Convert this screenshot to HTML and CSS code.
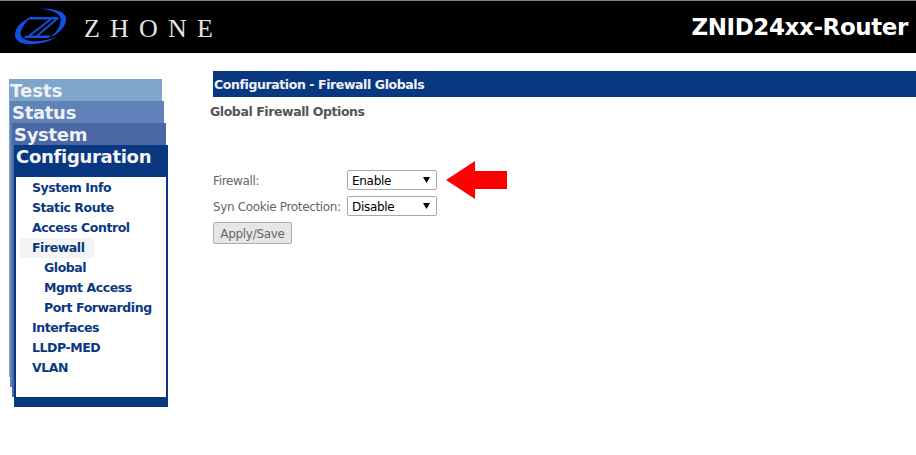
FILE: index.html
```html
<!DOCTYPE html>
<html lang="en">
<head>
  <meta charset="UTF-8">
  <title>ZNID24xx-Router</title>
  <link rel="stylesheet" href="styles.css">
</head>
<body>
  <div class="header">
    <div class="brand">
      <svg class="logo" width="56" height="44" viewBox="12 5 56 44">
        <!-- left swoosh -->
        <path d="M31 17C22 21 15 27 15 35C15 42 24 45 33 44C41 44 50 41 57 37C48 40 39 42 31 41C23 40 19 36 21 31C23 26 26 21 31 17Z" fill="#1450e0"/>
        <!-- right swoosh -->
        <path d="M40 9C49 8 60 10 64 14C68 18 66 25 61 30C58 33 54 36 50 38C54 34 59 29 60 24C62 18 59 14 54 12C50 10 45 9 40 9Z" fill="#1450e0"/>
        <!-- z -->
        <path d="M30 17H59L56 19.5H27.5ZM26 35.5H51L48.5 38H23.5Z" fill="#1450e0"/>
        <path d="M58 18L37 36M51 19L29 36" stroke="#1450e0" stroke-width="1.8" fill="none"/>
      </svg>
      <span class="brand-name">ZHONE</span>
    </div>
    <div class="product">ZNID24xx-Router</div>
  </div>

  <div class="page">
    <div class="nav">
      <div class="tab tab-tests">
        <div class="tab-title tests-title">Tests</div>
        <div class="tab tab-status">
          <div class="tab-title">Status</div>
          <div class="tab tab-system">
            <div class="tab-title">System</div>
            <div class="tab tab-config">
              <div class="tab-title config-title">Configuration</div>
              <ul class="menu">
                <li><a>System Info</a></li>
                <li><a>Static Route</a></li>
                <li><a>Access Control</a></li>
                <li class="active"><a>Firewall</a></li>
                <li class="sub"><a>Global</a></li>
                <li class="sub"><a>Mgmt Access</a></li>
                <li class="sub"><a>Port Forwarding</a></li>
                <li><a>Interfaces</a></li>
                <li><a>LLDP-MED</a></li>
                <li><a>VLAN</a></li>
              </ul>
            </div>
          </div>
        </div>
      </div>
    </div>

    <div class="content">
      <div class="title-bar">Configuration - Firewall Globals</div>
      <h3 class="section-title">Global Firewall Options</h3>

      <form class="options">
        <div class="form-row">
          <label class="field-label">Firewall:</label>
          <select class="field-select"><option>Enable</option><option>Disable</option></select>
          <svg class="arrow" width="62" height="38" viewBox="0 0 62 38">
            <path d="M0 19L29 0V10H61V28H29V38Z" fill="#ff0000"/>
          </svg>
        </div>
        <div class="form-row">
          <label class="field-label">Syn Cookie Protection:</label>
          <select class="field-select"><option>Disable</option><option>Enable</option></select>
        </div>
        <button type="button" class="save-btn">Apply/Save</button>
      </form>
    </div>
  </div>
</body>
</html>
```

FILE: styles.css
```css
body {
  margin: 0;
  font-family: "DejaVu Sans", Verdana, sans-serif;
  background: #fff;
  height: 455px;
  overflow: hidden;
}

.header {
  display: flex;
  justify-content: space-between;
  align-items: center;
  height: 52px;
  background: #000;
  border-top: 1px solid #888;
  padding-right: 8px;
}

.brand {
  display: flex;
  align-items: center;
  padding-left: 12px;
}

.logo {
  margin-right: 16px;
}

.brand-name {
  padding-top: 3px;
  font-family: "Liberation Serif", serif;
  font-size: 26px;
  letter-spacing: 10.2px;
  color: #e4e4e4;
}

.product {
  font-size: 23px;
  font-weight: bold;
  letter-spacing: -0.4px;
  color: #fff;
}

.page {
  display: flex;
}

/* menu tabs are nested, each one pokes out right and below its parent */
.nav {
  width: 213px;
  flex: none;
  padding: 26px 0 0 9px;
  box-sizing: border-box;
}

.tab {
  box-sizing: border-box;
}

.tab-title {
  height: 22px;
  font-size: 18px;
  line-height: 24px;
  font-weight: bold;
  letter-spacing: -0.3px;
  color: #eef1f6;
}

.tests-title {
  letter-spacing: 0.1px;
}

.tab-tests {
  width: 153px;
  height: 298px;
  background: #7fa5cb;
  padding-left: 1px;
}

.tab-status {
  width: 154px;
  height: 286px;
  background: #5f82b9;
  padding-left: 2px;
}

.tab-system {
  width: 154px;
  height: 274px;
  background: #4b67a6;
  padding-left: 2px;
}

.tab-config {
  width: 154px;
  height: 262px;
  background: #0a3880;
  padding: 0 2px 10px;
}

.config-title {
  height: 32px;
  line-height: 24px;
  letter-spacing: -0.3px;
  color: #f4f6fa;
}

.menu {
  list-style: none;
  margin: 0;
  padding: 1px 0 19px;
  height: 220px;
  box-sizing: border-box;
  background: #fff;
}

.menu li {
  height: 20px;
  line-height: 20px;
  padding-left: 16px;
  font-size: 12.5px;
  font-weight: bold;
  letter-spacing: -0.44px;
  color: #0a3880;
}

.menu li.sub {
  padding-left: 28px;
}

.menu li.active {
  width: 62px;
  margin-left: 4px;
  padding-left: 12px;
  background: #f4f4f4;
}

.content {
  flex: 1;
  padding-top: 18px;
}

.title-bar {
  height: 26px;
  line-height: 27px;
  padding-left: 1px;
  background: #0a3880;
  color: #f0f3f8;
  font-size: 12.5px;
  font-weight: bold;
  letter-spacing: -0.4px;
}

.section-title {
  margin: 7px 0 0 -3px;
  height: 16px;
  line-height: 16px;
  font-size: 12.5px;
  font-weight: bold;
  letter-spacing: -0.42px;
  color: #555;
}

.options {
  padding-top: 50px;
}

.form-row {
  display: flex;
  align-items: center;
  height: 20px;
  margin-bottom: 6px;
}

.field-label {
  width: 134px;
  flex: none;
  padding-top: 1px;
  font-size: 12px;
  letter-spacing: -0.35px;
  color: #666;
}

.field-select {
  appearance: none;
  width: 90px;
  height: 20px;
  padding: 1px 0 0 4px;
  font-family: "DejaVu Sans", Verdana, sans-serif;
  font-size: 12px;
  letter-spacing: -0.3px;
  color: #000;
  background: #fff url("data:image/svg+xml,%3Csvg xmlns='http://www.w3.org/2000/svg' width='7' height='6'%3E%3Cpath d='M0 0H7L3.5 6Z'/%3E%3C/svg%3E") no-repeat right 6px center;
  border: 1px solid #a9a9a9;
  border-radius: 2px;
}

.arrow {
  flex: none;
  margin-left: 9px;
}

.save-btn {
  display: block;
  width: 79px;
  height: 22px;
  padding: 1px 0 0;
  font-family: "DejaVu Sans", Verdana, sans-serif;
  font-size: 12px;
  letter-spacing: -0.3px;
  color: #666;
  background: #e6e6e6;
  border: 1px solid #adadad;
  border-radius: 2px;
}
```
